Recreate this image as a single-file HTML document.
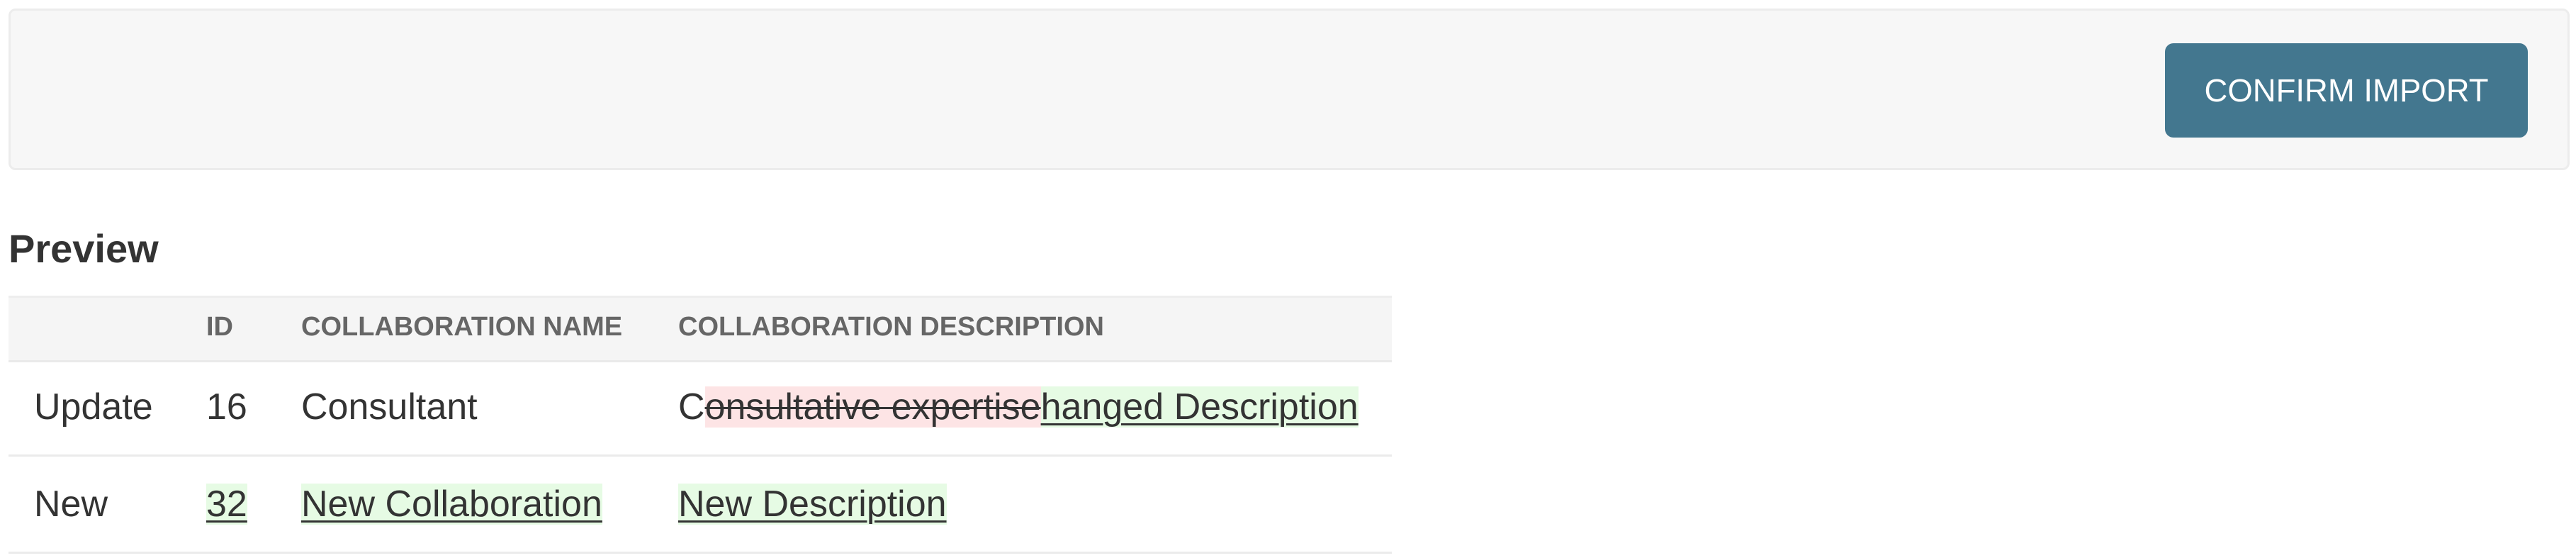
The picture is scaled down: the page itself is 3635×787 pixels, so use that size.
<!DOCTYPE html>
<html><head><style>
body{margin:0;width:3635px;height:787px;background:#fff;font-family:"Liberation Sans",Arial,sans-serif;color:#333;position:relative;overflow:hidden}
.a{position:absolute;white-space:nowrap}
.panel{left:12px;top:12px;width:3608px;height:222px;background:#f7f7f7;border:3px solid #ececec;border-radius:10px}
.btn{left:3055px;top:61px;width:512px;height:133px;background:#43778f;border-radius:12px;color:#fff;font-size:45.5px;line-height:133px;text-align:center}
.h{font-weight:bold;font-size:56px;left:12px;top:318px}
.th{left:12px;top:417px;width:1952px;height:88px;background:#f5f5f5;border-bottom:3px solid #eaeaea;border-top:3px solid #eeeeee}
.hc{font-weight:bold;font-size:38px;color:#666;top:440px}
.line{left:12px;width:1952px;height:3px;background:#ebebeb}
.c{font-size:52px;line-height:62px}
.r1{top:543px}.r2{top:680px}
.g{background:#e6fbe4;text-decoration:underline;text-decoration-thickness:3px;text-underline-offset:6px}
.p{background:#fde4e5;text-decoration:line-through;text-decoration-thickness:3px}
</style></head><body>
<div class="a panel"></div>
<div class="a btn">CONFIRM IMPORT</div>
<div class="a h">Preview</div>
<div class="a th"></div>
<div class="a hc" style="left:291px">ID</div>
<div class="a hc" style="left:425px">COLLABORATION NAME</div>
<div class="a hc" style="left:957px">COLLABORATION DESCRIPTION</div>
<div class="a c r1" style="left:48px">Update</div>
<div class="a c r1" style="left:291px">16</div>
<div class="a c r1" style="left:425px">Consultant</div>
<div class="a c r1" style="left:957px">C<span class="p">onsultative expertise</span><span class="g">hanged Description</span></div>
<div class="a line" style="top:641px"></div>
<div class="a c r2" style="left:48px">New</div>
<div class="a c r2" style="left:291px"><span class="g">32</span></div>
<div class="a c r2" style="left:425px"><span class="g">New Collaboration</span></div>
<div class="a c r2" style="left:957px"><span class="g">New Description</span></div>
<div class="a line" style="top:778px"></div>
</body></html>
